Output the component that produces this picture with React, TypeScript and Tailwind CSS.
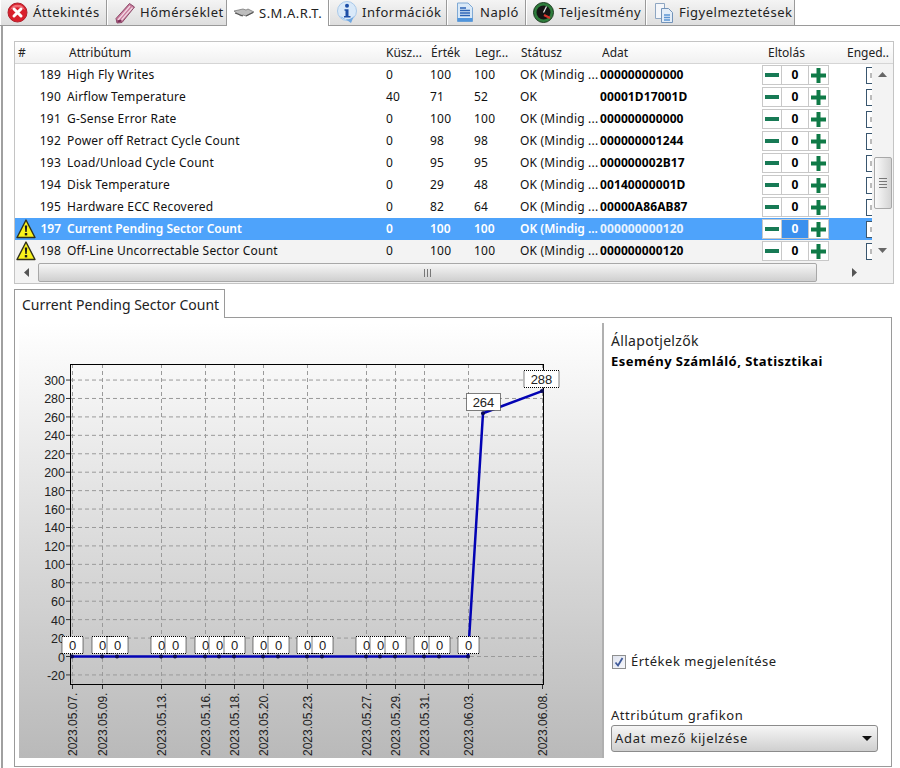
import type { ReactNode } from 'react'

const FONT = '[font-family:"Noto_Sans","Open_Sans",sans-serif]'

interface Row {
  id: number
  name: string
  thresh: number
  value: number
  worst: number
  status: string
  raw: string
  warn?: boolean
}

const ROWS: Row[] = [
  { id: 189, name: 'High Fly Writes', thresh: 0, value: 100, worst: 100, status: 'OK (Mindig ...', raw: '000000000000' },
  { id: 190, name: 'Airflow Temperature', thresh: 40, value: 71, worst: 52, status: 'OK', raw: '00001D17001D' },
  { id: 191, name: 'G-Sense Error Rate', thresh: 0, value: 100, worst: 100, status: 'OK (Mindig ...', raw: '000000000000' },
  { id: 192, name: 'Power off Retract Cycle Count', thresh: 0, value: 98, worst: 98, status: 'OK (Mindig ...', raw: '000000001244' },
  { id: 193, name: 'Load/Unload Cycle Count', thresh: 0, value: 95, worst: 95, status: 'OK (Mindig ...', raw: '000000002B17' },
  { id: 194, name: 'Disk Temperature', thresh: 0, value: 29, worst: 48, status: 'OK (Mindig ...', raw: '00140000001D' },
  { id: 195, name: 'Hardware ECC Recovered', thresh: 0, value: 82, worst: 64, status: 'OK (Mindig ...', raw: '00000A86AB87' },
  { id: 197, name: 'Current Pending Sector Count', thresh: 0, value: 100, worst: 100, status: 'OK (Mindig ...', raw: '000000000120', warn: true },
  { id: 198, name: 'Off-Line Uncorrectable Sector Count', thresh: 0, value: 100, worst: 100, status: 'OK (Mindig ...', raw: '000000000120', warn: true },
]

const SELECTED = 197

function ErrorIcon() {
  return (
    <svg width="21" height="21" viewBox="0 0 21 21">
      <circle cx="10.500" cy="10.500" r="9.500" fill="#d9202c" stroke="#b0202c" />
      <path d="M3 8a8 8 0 0 1 15 0 12 12 0 0 0-15 0z" fill="#ef6d75" />
      <path d="M7 7l7 7M14 7l-7 7" stroke="#fff" strokeWidth="3" strokeLinecap="round" />
    </svg>
  )
}

function ThermoIcon() {
  return (
    <svg width="22" height="22" viewBox="0 0 22 22">
      <path d="M15.500 1.500l5 3.500L8 20.500 3 21l-1-4.500z" fill="#c97a9c" stroke="#8a4a68" />
      <path d="M4 18L16 4M7 18.500L18.500 5.500" stroke="#f1d8e3" strokeWidth="1.300" />
      <path d="M3.500 19.500l4-1" stroke="#7c2f58" strokeWidth="2" />
    </svg>
  )
}

function DiskIcon() {
  return (
    <svg width="20" height="10" viewBox="0 0 20 10">
      <path d="M0 3l9-2 3 1 2-1 6 3-8 4-3-1-2 1z" fill="#bdbdbd" stroke="#6d6d6d" strokeWidth="0.700" />
      <path d="M1 5l8 3M12 8l7-3.500" stroke="#555" strokeWidth="1.200" />
    </svg>
  )
}

function InfoIcon() {
  return (
    <svg width="22" height="23" viewBox="0 0 22 23">
      <circle cx="11" cy="10" r="9.500" fill="#d9e9f9" stroke="#a9c9ea" />
      <path d="M4 15a9 9 0 0 0 14 0l-3 7-5-3.500z" fill="#6ea6e0" />
      <circle cx="11" cy="4.800" r="2" fill="#1d4fa8" />
      <path d="M8.500 8.200h4v6.800H14.500v1.500H8v-1.500h1.500V9.700h-1z" fill="#1d4fa8" />
    </svg>
  )
}

function DocIcon() {
  return (
    <svg width="18" height="21" viewBox="0 0 18 21">
      <path d="M1.500 1h10.500l4.500 4.500V19.500H1.500z" fill="#d9e9f8" stroke="#7fa9d4" />
      <path d="M1.500 16h15v3.500h-15z" fill="#4f94dc" />
      <path d="M4 6h6M4 8.500h10M4 11h10M4 13.500h10" stroke="#2b63b5" strokeWidth="1.500" />
    </svg>
  )
}

function GaugeIcon() {
  return (
    <svg width="21" height="21" viewBox="0 0 21 21">
      <circle cx="10.500" cy="10.500" r="10" fill="#2e7d3c" stroke="#1c3a20" />
      <circle cx="10.500" cy="10.500" r="7" fill="#151515" />
      <path d="M10.500 10.500l3-6" stroke="#e8e8e8" strokeWidth="1.300" />
      <path d="M11 13l6 3" stroke="#d8352c" strokeWidth="2.200" />
    </svg>
  )
}

function PagesIcon() {
  return (
    <svg width="20" height="22" viewBox="0 0 20 22">
      <path d="M1.500 1.500h9v15h-9z" fill="#f4f6fa" stroke="#8ea6c2" />
      <path d="M7.500 6.500h7l4 4v10h-11z" fill="#e3edf8" stroke="#7393b8" />
      <path d="M10 13h6M10 15.500h6M10 18h6" stroke="#5b95d3" strokeWidth="1.300" />
    </svg>
  )
}

function WarnIcon() {
  return (
    <svg width="20" height="20" viewBox="0 0 20 20">
      <path d="M10 1L19 18.500H1z" fill="#f8f21c" stroke="#30301a" strokeWidth="1.400" strokeLinejoin="round" />
      <path d="M8.800 6.500h2.400l-.5 6.500H9.300z" fill="#1c1c1c" />
      <rect x="8.800" y="14" width="2.400" height="2.400" fill="#1c1c1c" />
    </svg>
  )
}

function Tab({ icon, label, width, active }: { icon: ReactNode; label: string; width: string; active?: boolean }) {
  return (
    <div
      className={`${width} flex items-center gap-[4px] pl-[5px] shrink-0 border-r border-[#9a9a9a] ${
        active
          ? 'h-[26px] -mb-px bg-white relative'
          : 'h-[25px] bg-gradient-to-b from-[#f4f4f4] to-[#dedede] border-l border-l-white'
      }`}
    >
      <span className="w-[23px] flex justify-center shrink-0">{icon}</span>
      <span className="text-[13px] text-[#222] whitespace-nowrap tracking-[0.5px] pt-px">{label}</span>
    </div>
  )
}

function Spinner({ selected }: { selected: boolean }) {
  return (
    <div className="w-[67px] h-[20px] flex border border-[#c8c8c8] bg-white">
      <div className="w-[19px] flex items-center justify-center border-r border-[#c8c8c8]">
        <div className="w-[14px] h-[4px] bg-[#177a55]" />
      </div>
      <div
        className={`w-[27px] flex items-center justify-center border-r border-[#c8c8c8] font-bold text-[12px] ${
          selected ? 'bg-[#3a90ee] text-white' : 'text-black'
        }`}
      >
        0
      </div>
      <div className="flex-1 flex items-center justify-center">
        <svg width="15" height="15" viewBox="0 0 15 15">
          <path d="M5.500 0h4v5.500H15v4H9.500V15h-4V9.500H0v-4h5.500z" fill="#0f7a47" />
        </svg>
      </div>
    </div>
  )
}

function AttrRow({ row, last }: { row: Row; last: boolean }) {
  const selected = row.id === SELECTED
  const bg = selected ? 'bg-[#4ea3fb] text-white font-semibold' : last ? 'bg-[#f3f3f3] text-[#111] tracking-[0.2px]' : 'bg-white text-[#111] tracking-[0.2px]'
  return (
    <div className={`h-[22px] flex items-center text-[12px] whitespace-nowrap ${bg}`}>
      <div className="w-[24px] pl-[1px] shrink-0 flex">{row.warn && <WarnIcon />}</div>
      <div className="w-[22px] shrink-0 text-right">{row.id}</div>
      <div className="w-[325px] pl-[6px] shrink-0">{row.name}</div>
      <div className="w-[44px] shrink-0">{row.thresh}</div>
      <div className="w-[44px] shrink-0">{row.value}</div>
      <div className="w-[46px] shrink-0">{row.worst}</div>
      <div className="w-[80px] shrink-0">{row.status}</div>
      <div className={`w-[162px] shrink-0 font-bold tracking-[0.1px] ${selected ? 'text-[#e8f3ff]' : 'text-black'}`}>{row.raw}</div>
      <div className="w-[104px] shrink-0">
        <Spinner selected={selected} />
      </div>
      <div className="h-[17px] w-[6px] shrink-0 border-l border-y border-[#39566f] bg-white flex items-center justify-end">
        <div className="w-[2px] h-[5px] bg-[#bbb]" />
      </div>
    </div>
  )
}

const HEADERS: [string, string][] = [
  ['#', 'w-[54px] pl-[3px]'],
  ['Attribútum', 'w-[317px]'],
  ['Küsz...', 'w-[45px]'],
  ['Érték', 'w-[44px]'],
  ['Legr...', 'w-[46px]'],
  ['Státusz', 'w-[81px]'],
  ['Adat', 'w-[166px]'],
  ['Eltolás', 'w-[79px]'],
  ['Enged..', 'w-[46px]'],
]

function ListHeader() {
  return (
    <div className="h-[22px] flex items-center pt-px text-[12px] text-[#222] bg-gradient-to-b from-white to-[#f1f1f1] border-b border-[#d5d5d5] whitespace-nowrap">
      {HEADERS.map(([label, width]) => (
        <div key={label} className={`${width} shrink-0 overflow-hidden`}>
          {label}
        </div>
      ))}
    </div>
  )
}

function VScroll() {
  return (
    <div className="w-[21px] shrink-0 flex flex-col items-center bg-[#f3f3f3]">
      <div className="h-[11px] mt-[5px] flex items-center">
        <svg width="9" height="5" viewBox="0 0 9 5"><path d="M0 5L4.500 0 9 5z" fill="#666" /></svg>
      </div>
      <div className="h-[77px]" />
      <div className="w-[18px] h-[52px] rounded-[2px] border border-[#a8a8a8] bg-gradient-to-r from-[#fafafa] to-[#d4d4d4] flex flex-col items-center justify-center gap-[2px]">
        <div className="w-[8px] h-px bg-[#777]" />
        <div className="w-[8px] h-px bg-[#777]" />
        <div className="w-[8px] h-px bg-[#777]" />
        <div className="w-[8px] h-px bg-[#777]" />
      </div>
      <div className="flex-1" />
      <div className="h-[11px] mb-[6px] flex items-center">
        <svg width="9" height="5" viewBox="0 0 9 5"><path d="M0 0L4.500 5 9 0z" fill="#666" /></svg>
      </div>
    </div>
  )
}

function HScroll() {
  return (
    <div className="h-[21px] flex items-center bg-[#f3f3f3] shrink-0">
      <div className="w-[23px] flex justify-center">
        <svg width="5" height="9" viewBox="0 0 5 9"><path d="M5 0L0 4.500 5 9z" fill="#555" /></svg>
      </div>
      <div className="w-[779px] h-[19px] rounded-[2px] border border-[#a8a8a8] bg-gradient-to-b from-[#f6f6f6] to-[#cfcfcf] flex items-center justify-center gap-[2px]">
        <div className="w-px h-[8px] bg-[#777]" />
        <div className="w-px h-[8px] bg-[#777]" />
        <div className="w-px h-[8px] bg-[#777]" />
      </div>
      <div className="w-[40px] flex justify-end">
        <svg width="5" height="9" viewBox="0 0 5 9"><path d="M0 0L5 4.500 0 9z" fill="#555" /></svg>
      </div>
    </div>
  )
}

const Y_TICKS = [300, 280, 260, 240, 220, 200, 180, 160, 140, 120, 100, 80, 60, 40, 20, 0, -20]
const yOf = (v: number) => 656.5 - v * 0.9215

const DATES: [number, string][] = [
  [72, '2023.05.07.'],
  [102, '2023.05.09.'],
  [161, '2023.05.13.'],
  [205, '2023.05.16.'],
  [234, '2023.05.18.'],
  [263, '2023.05.20.'],
  [307, '2023.05.23.'],
  [366, '2023.05.27.'],
  [395, '2023.05.29.'],
  [424, '2023.05.31.'],
  [468, '2023.06.03.'],
  [542, '2023.06.08.'],
]

const ZERO_XS = [72, 102, 117, 161, 175, 205, 219, 234, 263, 278, 307, 322, 366, 380, 395, 424, 439, 468]

function ValueLabel({ x, y, w, text }: { x: number; y: number; w: number; text: string }) {
  return (
    <g>
      <rect x={x - w / 2 + 0.5} y={y + 0.5} width={w} height={17} fill="#fff" stroke="#000" strokeDasharray="1 1" />
      <text x={x + 0.5} y={y + 14} textAnchor="middle" fontSize="13" fill="#222">
        {text}
      </text>
    </g>
  )
}

function Chart() {
  return (
    <div className="w-[585px] h-[435px] bg-gradient-to-b from-white to-[#b9b9b9] border-r-2 border-[#b0b0b0] shrink-0">
      <svg width="583" height="435" viewBox="19 323 583 435" fontFamily="'Liberation Sans', Arial, sans-serif">
        {Y_TICKS.map(v => (
          <g key={v}>
            <line x1="71" x2="544" y1={yOf(v)} y2={yOf(v)} stroke="#9a9a9a" strokeDasharray="4 3" />
            <line x1="66" x2="71" y1={yOf(v)} y2={yOf(v)} stroke="#333" />
            <text x="65" y={yOf(v) + 5} textAnchor="end" fontSize="12.500" fill="#222">
              {v}
            </text>
          </g>
        ))}
        {DATES.map(([x, label]) => (
          <g key={label}>
            <line x1={x + 0.5} x2={x + 0.5} y1="364" y2="684" stroke="#9a9a9a" strokeDasharray="4 3" />
            <line x1={x + 0.5} x2={x + 0.5} y1="684" y2="689" stroke="#333" />
            <text transform={`translate(${x + 4.5} 756) rotate(-90)`} fontSize="12" fill="#222">
              {label}
            </text>
          </g>
        ))}
        <rect x="70.500" y="364.500" width="473" height="320" fill="none" stroke="#000" />
        <polyline
          points={`72,${yOf(0)} 468,${yOf(0)} 483,${yOf(264)} 542,${yOf(288)}`}
          fill="none"
          stroke="#0303b4"
          strokeWidth="2.500"
        />
        {ZERO_XS.map(x => (
          <circle key={x} cx={x} cy={yOf(0)} r="2" fill="#0a0a55" />
        ))}
        <circle cx="483" cy={yOf(264)} r="2" fill="#0a0a55" />
        <circle cx="542" cy={yOf(288)} r="2" fill="#0a0a55" />
        {ZERO_XS.map(x => (
          <ValueLabel key={x} x={x} y={636} w={21} text="0" />
        ))}
        <ValueLabel x={483} y={393} w={34} text="264" />
        <ValueLabel x={541} y={370} w={35} text="288" />
      </svg>
    </div>
  )
}

function SidePanel() {
  return (
    <div className="flex-1 flex flex-col pl-[7px] text-[13px] text-[#222] h-[435px]">
      <div className="mt-[8px] leading-[20px] text-[14px] tracking-[0.3px]">Állapotjelzők</div>
      <div className="font-bold text-black leading-[20px] tracking-[0.45px]">Esemény Számláló, Statisztikai</div>
      <div className="flex-1" />
      <div className="flex items-center gap-[5px] ml-px h-[16px]">
        <div className="w-[14px] h-[14px] border border-[#8e8f8f] bg-gradient-to-br from-[#dfe3ee] to-[#f6f7fb] flex items-center justify-center">
          <svg width="10" height="10" viewBox="0 0 10 10">
            <path d="M1.500 5.500l2.500 3 4.500-7.500" fill="none" stroke="#3f5a9a" strokeWidth="1.800" />
          </svg>
        </div>
        <span className="tracking-[0.5px]">Értékek megjelenítése</span>
      </div>
      <div className="h-[36px]" />
      <div className="leading-[18px] tracking-[0.55px]">Attribútum grafikon</div>
      <div className="w-[267px] h-[27px] mt-[1px] mb-[6px] rounded-[3px] border border-[#8b8b8b] bg-gradient-to-b from-[#f6f6f6] to-[#cfcfcf] flex items-center justify-between pl-[3px] pr-[5px]">
        <span className="tracking-[0.7px]">Adat mező kijelzése</span>
        <svg width="10" height="5" viewBox="0 0 10 5"><path d="M0 0h10L5 5z" fill="#111" /></svg>
      </div>
    </div>
  )
}

export default function App() {
  return (
    <div className={`${FONT} w-[900px] h-[768px] overflow-hidden bg-white flex flex-col`}>
      <div className="h-[26px] flex items-start border-b border-[#9a9a9a] bg-white shrink-0">
        <div className="flex items-start">
          <Tab icon={<ErrorIcon />} label="Áttekintés" width="w-[107px]" />
          <Tab icon={<ThermoIcon />} label="Hőmérséklet" width="w-[120px]" />
          <Tab icon={<DiskIcon />} label="S.M.A.R.T." width="w-[102px]" active />
          <Tab icon={<InfoIcon />} label="Információk" width="w-[118px]" />
          <Tab icon={<DocIcon />} label="Napló" width="w-[79px]" />
          <Tab icon={<GaugeIcon />} label="Teljesítmény" width="w-[120px]" />
          <Tab icon={<PagesIcon />} label="Figyelmeztetések" width="w-[149px]" />
        </div>
      </div>

      <div className="flex-1 flex flex-col ml-px border-l-2 border-[#a0a0a0] pl-[11px] min-h-0">
        <div className="w-[880px] h-[243px] mt-[15px] border border-[#c4c4c4] flex flex-col shrink-0">
          <ListHeader />
          <div className="flex flex-1 min-h-0 overflow-hidden">
            <div className="flex-1 min-w-0 overflow-hidden">
              {ROWS.map((r, i) => (
                <AttrRow key={r.id} row={r} last={i === ROWS.length - 1} />
              ))}
            </div>
            <VScroll />
          </div>
          <HScroll />
        </div>

        <div className="h-[28px] mt-[5px] flex shrink-0">
          <div className="w-[211px] h-[29px] border border-b-0 border-[#9a9a9a] bg-white flex items-center pl-[7px] text-[14px] text-[#222] relative z-10">
            Current Pending Sector Count
          </div>
        </div>
        <div className="w-[878px] h-[450px] border border-[#9a9a9a] flex pt-[5px] pl-[4px]">
          <Chart />
          <SidePanel />
        </div>
      </div>
    </div>
  )
}
